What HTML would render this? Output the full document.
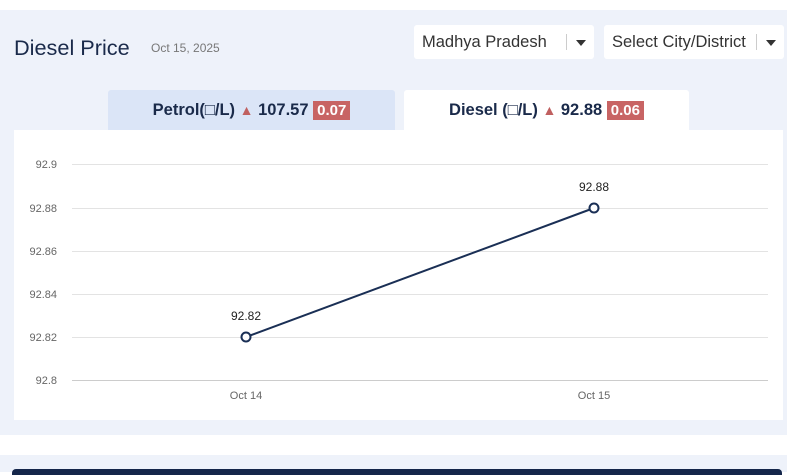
<!DOCTYPE html>
<html><head><style>
body{margin:0;width:787px;height:472px;background:#fff;font-family:"Liberation Sans",sans-serif;position:relative;overflow:hidden}
.panel{position:absolute;left:0;top:10px;width:787px;height:425px;background:#eef2fa}
.title{position:absolute;left:14px;top:35px;font-size:21.7px;color:#1a2a4a}
.date{position:absolute;left:151px;top:41px;font-size:12px;color:#777}
.sel{position:absolute;top:25px;height:34px;background:#fff;border-radius:3px;font-size:16.5px;color:#333;line-height:34px}
.sel .bar{position:absolute;top:9px;width:1px;height:16px;background:#ccc}
.sel .ar{position:absolute;top:15px;width:0;height:0;border-left:5px solid transparent;border-right:5px solid transparent;border-top:6px solid #333}
.tab{position:absolute;top:90px;height:40px;line-height:40px;text-align:center;font-weight:bold;font-size:16.5px;color:#1a2a4a}
.tri{color:#c06060;font-size:14px}
.badge{background:#c86464;color:#fff;padding:1px 4px;font-size:15px}
.card{position:absolute;left:14px;top:130px;width:769px;height:290px;background:#fff}
.p2{position:absolute;left:0;top:455px;width:787px;height:17px;background:#eef2fa}
.nav{position:absolute;left:12px;top:469px;width:770px;height:6px;background:#14264a;border-radius:4px 4px 0 0}
</style></head><body>
<div class="panel"></div>
<div class="title">Diesel Price</div>
<div class="date">Oct 15, 2025</div>
<div class="sel" style="left:414px;width:180px"><span style="margin-left:8px">Madhya Pradesh</span><div class="bar" style="left:152px"></div><div class="ar" style="left:162px"></div></div>
<div class="sel" style="left:604px;width:180px"><span style="margin-left:8px">Select City/District</span><div class="bar" style="left:152px"></div><div class="ar" style="left:162px"></div></div>
<div class="tab" style="left:108px;width:287px;background:#dbe5f7;border-radius:3px 3px 0 0">Petrol(□/L) <span class="tri">▲</span> 107.57 <span class="badge">0.07</span></div>
<div class="tab" style="left:404px;width:285px;background:#fff;border-radius:3px 3px 0 0">Diesel (□/L) <span class="tri">▲</span> 92.88 <span class="badge">0.06</span></div>
<div class="card"></div>
<svg style="position:absolute;left:0;top:0" width="787" height="472" font-family="Liberation Sans" font-size="11" fill="#666">
<g stroke="#e3e3e3" stroke-width="1">
<line x1="72" y1="164.5" x2="768" y2="164.5"/><line x1="72" y1="208.5" x2="768" y2="208.5"/><line x1="72" y1="251.5" x2="768" y2="251.5"/><line x1="72" y1="294.5" x2="768" y2="294.5"/><line x1="72" y1="337.5" x2="768" y2="337.5"/></g>
<line x1="72" y1="380.5" x2="768" y2="380.5" stroke="#ccc"/>
<text x="57" y="168" text-anchor="end">92.9</text><text x="57" y="212" text-anchor="end">92.88</text><text x="57" y="255" text-anchor="end">92.86</text><text x="57" y="298" text-anchor="end">92.84</text><text x="57" y="341" text-anchor="end">92.82</text><text x="57" y="384" text-anchor="end">92.8</text>
<text x="246" y="399" text-anchor="middle">Oct 14</text><text x="594" y="399" text-anchor="middle">Oct 15</text>
<line x1="246" y1="337" x2="594" y2="208" stroke="#1a2f55" stroke-width="2"/>
<circle cx="246" cy="337" r="4.5" fill="#fff" stroke="#1a2f55" stroke-width="2"/>
<circle cx="594" cy="208" r="4.5" fill="#fff" stroke="#1a2f55" stroke-width="2"/>
<text x="246" y="320" text-anchor="middle" fill="#222" font-size="12">92.82</text>
<text x="594" y="191" text-anchor="middle" fill="#222" font-size="12">92.88</text>
</svg>
<div class="p2"></div>
<div class="nav"></div>
</body></html>
